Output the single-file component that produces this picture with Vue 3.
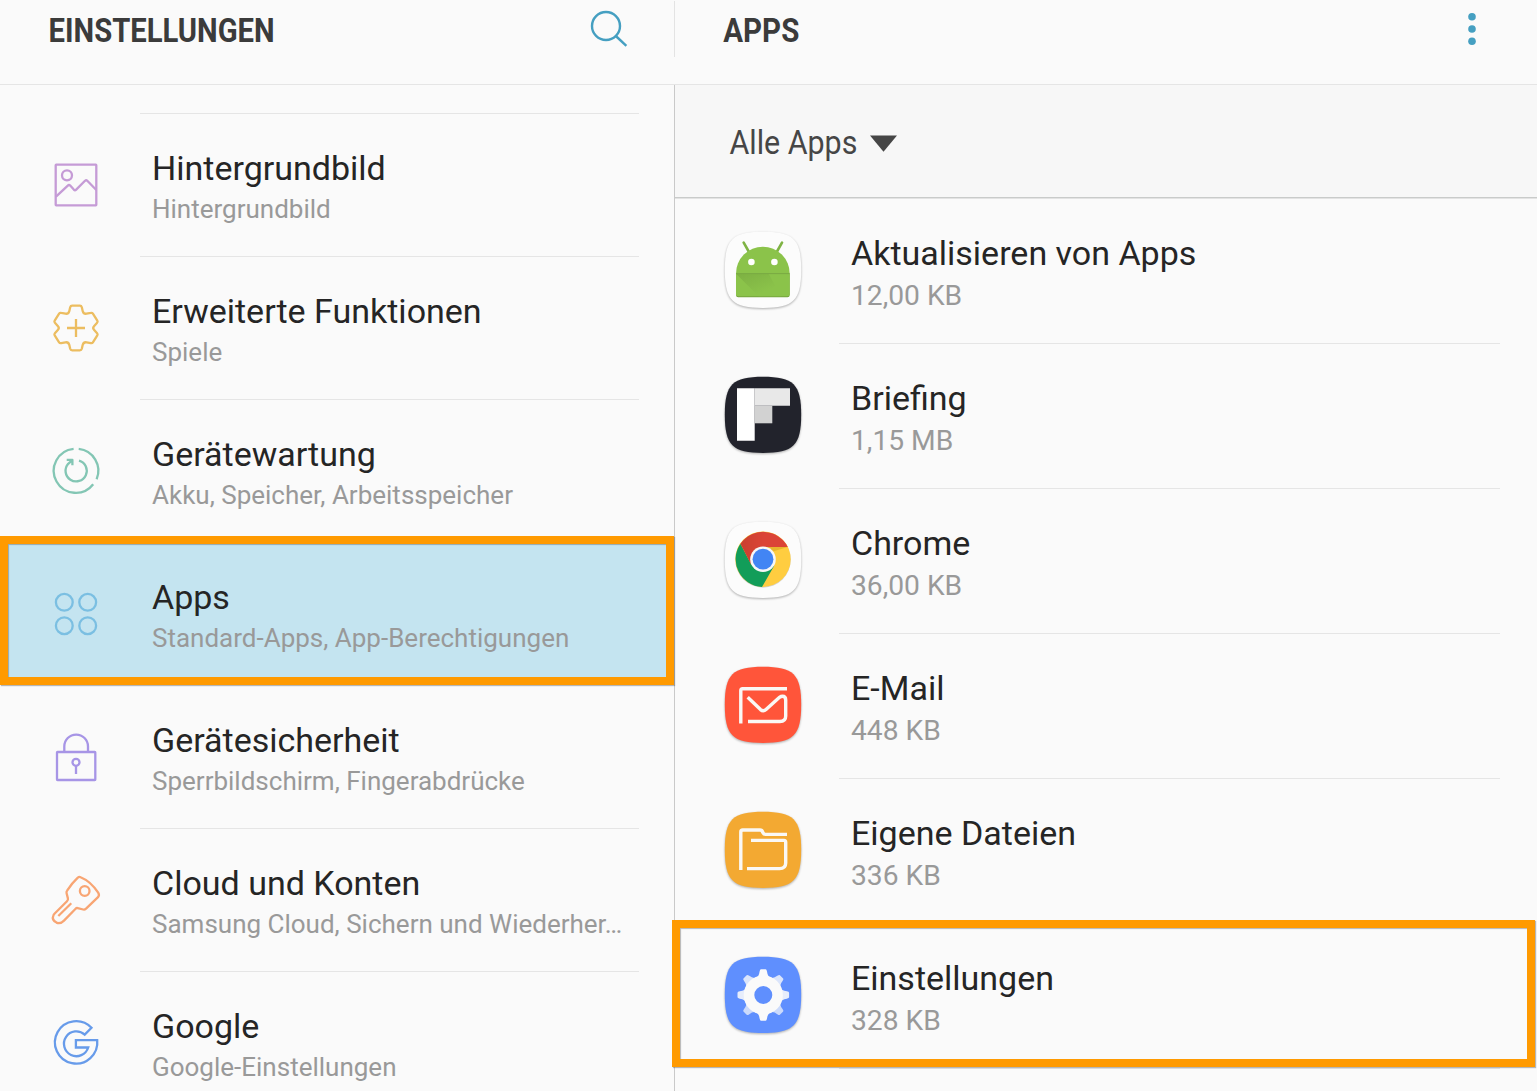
<script setup>
const settings = [
  { id: 'wallpaper', title: 'Hintergrundbild', sub: 'Hintergrundbild', color: '#c59bd6' },
  { id: 'advanced', title: 'Erweiterte Funktionen', sub: 'Spiele', color: '#ecbd60' },
  { id: 'care', title: 'Gerätewartung', sub: 'Akku, Speicher, Arbeitsspeicher', color: '#83c6b4' },
  { id: 'apps', title: 'Apps', sub: 'Standard-Apps, App-Berechtigungen', color: '#7bbfe2' },
  { id: 'lock', title: 'Gerätesicherheit', sub: 'Sperrbildschirm, Fingerabdrücke', color: '#a795e6' },
  { id: 'cloud', title: 'Cloud und Konten', sub: 'Samsung Cloud, Sichern und Wiederher…', color: '#f8a573' },
  { id: 'google', title: 'Google', sub: 'Google-Einstellungen', color: '#679bea' },
]
const apps = [
  { id: 'update', title: 'Aktualisieren von Apps', size: '12,00 KB', bg: '#fcfcfc' },
  { id: 'briefing', title: 'Briefing', size: '1,15 MB', bg: '#22232c' },
  { id: 'chrome', title: 'Chrome', size: '36,00 KB', bg: '#fcfcfc' },
  { id: 'email', title: 'E-Mail', size: '448 KB', bg: '#ff553a' },
  { id: 'files', title: 'Eigene Dateien', size: '336 KB', bg: '#f3a932' },
  { id: 'settings', title: 'Einstellungen', size: '328 KB', bg: '#5f8ffe' },
]
const squircle = 'M42 3.8C72.5 3.8 80.2 11.3 80.2 41.8S72.5 80 42 80S3.8 72.3 3.8 41.8S11.5 3.8 42 3.8Z'
const tooth = 'M34 25Q38 24 38.6 18.5Q39 16.2 40 16.2H44.6Q45.6 16.2 46 18.5Q46.6 24 50.6 25Z'
</script>

<template>
  <div class="screen">
    <header class="top">
      <div class="top-left">
        <svg class="heading" width="230" height="40"><text x=".6" y="30" textLength="226" lengthAdjust="spacingAndGlyphs">EINSTELLUNGEN</text></svg>
        <svg class="search" width="40" height="40" viewBox="0 0 40 40"><circle cx="17" cy="16" r="14" /><path d="M26.8 26L37.4 35.8" /></svg>
      </div>
      <div class="top-right">
        <svg class="heading" width="90" height="40"><text x=".3" y="30" textLength="76" lengthAdjust="spacingAndGlyphs">APPS</text></svg>
        <svg class="more" width="10" height="34"><circle cx="5" cy="4.7" r="3.8" /><circle cx="5" cy="17" r="3.8" /><circle cx="5" cy="29.3" r="3.8" /></svg>
      </div>
    </header>

    <main class="panes">
      <nav class="left">
        <div v-for="s in settings" :key="s.id" class="item" :class="s.id">
          <svg class="line-icon" width="48" height="48" viewBox="0 0 48 48" :stroke="s.color">
            <g v-if="s.id === 'wallpaper'"><rect x="3.7" y="3.7" width="40.6" height="40.6" rx=".5" /><circle cx="15" cy="14.3" r="5" /><path d="M4 35.7L15.8 24.6Q17 23.4 18.2 24.6L21.8 28.6Q23 29.8 24.2 28.6L33 19.8Q34.2 18.8 35.3 19.8L44.3 29" /></g>
            <g v-else-if="s.id === 'advanced'">
              <path d="M20.2 1.7H27.8Q29.4 1.7 29.8 3.2L30.8 7.4Q31.7 10.2 34.5 9.7L38.8 8.9Q40.2 8.6 40.9 9.7L45.3 16.6Q46 17.8 45.1 18.8L42 22.2Q40.4 24 42 25.8L45.1 29.2Q46 30.2 45.3 31.4L40.9 38.3Q40.2 39.4 38.8 39.1L34.5 38.3Q31.7 37.8 30.8 40.6L29.8 44.8Q29.4 46.3 27.8 46.3H20.2Q18.6 46.3 18.2 44.8L17.2 40.6Q16.3 37.8 13.5 38.3L9.2 39.1Q7.8 39.4 7.1 38.3L2.7 31.4Q2 30.2 2.9 29.2L6 25.8Q7.6 24 6 22.2L2.9 18.8Q2 17.8 2.7 16.6L7.1 9.7Q7.8 8.6 9.2 8.9L13.5 9.7Q16.3 10.2 17.2 7.4L18.2 3.2Q18.6 1.7 20.2 1.7Z" />
              <path d="M15 24H33M24 15V33" />
            </g>
            <g v-else-if="s.id === 'care'"><path d="M26.7 1.9A22 22 0 0 1 44.6 32.3M41.2 37.2A22 22 0 1 1 21.6 1.9" /><path d="M27 13.6A10.6 10.6 0 1 1 16.2 16.8L20.2 13.2M14.7 12.9H20.4V18.3" /></g>
            <g v-else-if="s.id === 'apps'"><circle cx="12.3" cy="12.3" r="8.4" /><circle cx="35.7" cy="12.3" r="8.4" /><circle cx="12.3" cy="35.7" r="8.4" /><circle cx="35.7" cy="35.7" r="8.4" /></g>
            <g v-else-if="s.id === 'lock'"><rect x="5" y="19" width="38.3" height="28" rx=".5" /><path d="M12.3 19V13.4A11.85 11.8 0 0 1 36 13.4V19M24 33V41" /><circle cx="24" cy="29.3" r="3.5" /></g>
            <g v-else-if="s.id === 'cloud'"><path d="M28.6 1.2Q38.8 5.3 46.2 16.7Q47.8 19.3 46 21.2L33.8 32.8Q32.8 33.9 31.2 33.5L25.7 32.1Q24.5 31.8 23.6 32.7L12 44.6Q8.3 48.3 4.5 46.6Q-.6 44 1.4 39.4Q1.7 38.5 2.7 37.5L15 25.2Q16.3 24 15.9 22.4L14.6 17.2Q14.2 15.8 15.1 14.6Q20 7 25.8 1.6Q27.2 .5 28.6 1.2Z" /><circle cx="32.7" cy="15" r="4.8" /><path d="M6.3 40L19.3 27.3" /></g>
            <g v-else><path stroke-linejoin="miter" d="M39.5 8.8A21.2 21.2 0 1 0 45.2 21.2H23.9V28.5H36.2A12.4 12.4 0 1 1 32.7 15.6Z" /></g>
          </svg>
          <div class="body"><div class="title">{{ s.title }}</div><div class="sub">{{ s.sub }}</div></div>
        </div>
        <div class="frame frame-left"></div>
      </nav>

      <section class="right">
        <div class="filter">
          <svg width="140" height="48"><text x=".4" y="34" textLength="128" lengthAdjust="spacingAndGlyphs">Alle Apps</text></svg>
          <svg class="caret" width="27" height="17"><path d="M0 .5H27L13.5 16.8Z" /></svg>
        </div>
        <div v-for="a in apps" :key="a.id" class="app">
          <svg class="app-icon" width="84" height="84" viewBox="0 0 84 84">
            <defs>
              <linearGradient id="fold" x1="0" y1="0" x2=".8" y2="1"><stop offset="0" stop-color="#6f9d3b" /><stop offset=".8" stop-color="#8bc34a" /></linearGradient>
              <linearGradient id="redShade" x1="0" y1="0" x2="1" y2="0"><stop offset="0" stop-color="#c9402f" /><stop offset=".5" stop-color="#db4437" /></linearGradient>
            </defs>
            <path :d="squircle" :fill="a.bg" />
            <g v-if="a.id === 'update'" transform="translate(-.3 0)">
              <path d="M23 14.6L28 23.5M61.3 14.6L56.3 23.5" stroke="#7fb344" stroke-width="2.6" stroke-linecap="round" />
              <path d="M15.3 45.7V67Q15.3 69.3 17.5 69.3H66.8Q69 69.3 69 67V45.7Z" fill="#74a33e" />
              <path d="M15.3 45.7A26.85 27 0 0 1 69 45.7Z" fill="#8bc34a" />
              <path d="M15.3 45.7V66.3Q15.3 68.3 17.5 68.3H66.8Q69 68.3 69 66.3V45.7Z" fill="#8bc34a" />
              <path d="M15.3 45.7L38 68.3H60L48 45.7Z" fill="url(#fold)" opacity=".5" />
              <path d="M15.3 45.6H69" stroke="#78a940" stroke-width="1" />
              <circle cx="30.7" cy="34" r="3.3" fill="#fff" /><circle cx="53.7" cy="34" r="3.3" fill="#fff" />
            </g>
            <g v-else-if="a.id === 'briefing'"><path d="M16 15.3H33.7V67.7H16Z" fill="#fff" /><path d="M33.7 15.3H69V32.7H33.7Z" fill="#e8e8e8" /><path d="M33.7 32.7H51.3V50.3H33.7Z" fill="#d2d2d2" /></g>
            <g v-else-if="a.id === 'chrome'" transform="translate(-.3 .2)">
              <circle cx="42.3" cy="41.8" r="27.7" fill="#b9b9b9" opacity=".6" />
              <circle cx="42.3" cy="41" r="27.7" fill="#ffcd40" />
              <path d="M42.3 28.7H67L53 33Z" fill="#e8b52e" />
              <path d="M19.7 25.5A27.7 27.7 0 0 0 41.3 68.7L53.5 47.5L42 41L31 47Z" fill="#129d59" />
              <path d="M19.7 25.5A27.7 27.7 0 0 1 67.1 28.7H42.3L30.5 46.5Z" fill="url(#redShade)" />
              <circle cx="42.3" cy="41" r="12.8" fill="#f7f7f7" /><circle cx="42.3" cy="41" r="10.4" fill="#4285f4" />
            </g>
            <g v-else-if="a.id === 'email'" class="glyph"><path d="M19.8 60.5V27.5Q19.8 25.7 21.6 25.7H66" /><path d="M27 58.5H59Q64.7 58.5 64.7 53V37Q64.7 33.2 61.5 33.2Q60 33.2 58.5 34.3L45 46.6Q42.3 49 39.5 46.6L26.7 34.3" /></g>
            <g v-else-if="a.id === 'files'" class="glyph"><path d="M19.8 62V24Q19.8 22 21.8 22H39Q41 22 41.6 24L42 24.8Q42.7 26.4 44.5 26.4H66" /><path d="M30 32.4H63Q64.7 32.4 64.7 34.2V55Q64.7 60.6 58.5 60.6H26" /></g>
            <g v-else fill="#fafafa">
              <path v-for="r in [45, 315]" :key="r" :d="tooth" :transform="`rotate(${r} 42.3 42)`" opacity=".8" />
              <path v-for="r in [135, 225]" :key="r" :d="tooth" :transform="`rotate(${r} 42.3 42)`" opacity=".7" />
              <path v-for="r in [90, 270]" :key="r" :d="tooth" :transform="`rotate(${r} 42.3 42)`" opacity=".88" />
              <path v-for="r in [0, 180]" :key="r" :d="tooth" :transform="`rotate(${r} 42.3 42)`" />
              <path fill-rule="evenodd" d="M42.3 22.4A19.6 19.6 0 1 0 42.3 61.6A19.6 19.6 0 1 0 42.3 22.4ZM42.3 33A9 9 0 1 1 42.3 51A9 9 0 1 1 42.3 33Z" />
            </g>
          </svg>
          <div class="body"><div class="title">{{ a.title }}</div><div class="size">{{ a.size }}</div></div>
        </div>
        <div class="frame frame-right"></div>
      </section>
    </main>
  </div>
</template>

<style>
body { margin: 0; overflow: hidden; background: #fafafa; }
</style>

<style scoped>
.screen { width: 1537px; height: 1091px; overflow: hidden; background: #fafafa; font-family: Roboto, "Liberation Sans", sans-serif; color: #252525; display: flex; flex-direction: column; }
svg { display: block; flex: none; overflow: visible; }
.top { height: 84px; flex: none; display: flex; border-bottom: 1px solid #e5e5e5; }
.top-left { box-sizing: border-box; width: 674px; padding: 0 46px 0 48px; display: flex; justify-content: space-between; }
.top-right { box-sizing: border-box; flex: 1; height: 56px; margin-top: 1px; padding: 0 60px 0 48px; border-left: 1px solid #e3e3e3; display: flex; justify-content: space-between; }
.heading { margin-top: 12px; }
.top-right .heading { margin-top: 11px; }
.heading text { font-size: 34px; font-weight: 700; fill: #3b3b3b; }
.search { margin-top: 10px; margin-right: -.5px; fill: none; stroke: #459fc1; stroke-width: 2.4; }
.more { margin-top: 11px; fill: #459fc1; }
.panes { flex: 1; display: flex; min-height: 0; }
.left { position: relative; box-sizing: border-box; width: 674px; padding-top: 28px; }
.item { position: relative; box-sizing: border-box; height: 143px; padding-left: 52px; display: flex; }
.item.apps { background: #c4e4f0; }
.line-icon { margin-top: 48px; fill: none; stroke-width: 2.3; stroke-linejoin: round; stroke-linecap: butt; }
.item .body { box-sizing: border-box; width: 499px; margin-left: 40px; padding: 34px 0 0 12px; border-top: 1px solid #e5e5e5; white-space: nowrap; }
.item.apps .body, .item.lock .body { border-top-color: transparent; }
.title { font-size: 34px; line-height: 40px; color: #252525; }
.sub { font-size: 26px; line-height: 30px; margin-top: 6px; color: #999; }
.right { position: relative; box-sizing: border-box; flex: 1; border-left: 1px solid #c9c9c9; }
.filter { box-sizing: border-box; height: 113px; margin-bottom: 1px; padding: 35px 0 0 54px; background: #f7f7f7; border-bottom: 1px solid #c9cbca; box-shadow: 0 1px #e3e3e3; display: flex; }
.filter text { font-size: 34px; fill: #464646; }
.caret { margin: 15px 0 0 1px; fill: #464646; }
.app { box-sizing: border-box; height: 145px; padding-left: 46px; display: flex; }
.app-icon { margin-top: 29px; filter: drop-shadow(0 1px .8px rgba(0, 0, 0, .3)); }
.app .body { box-sizing: border-box; width: 661px; margin-left: 34px; padding: 34px 0 0 12px; border-bottom: 1px solid #e5e5e5; }
.size { font-size: 28.2px; line-height: 32px; margin-top: 7px; color: #999; }
.glyph { fill: none; stroke: #faf8f5; stroke-width: 3.4; }
.frame { position: absolute; box-sizing: border-box; border: 8px solid #ff9a00; box-shadow: 1px 1px 1px rgba(80, 80, 80, .4), inset 1px 1px 1px rgba(80, 80, 80, .4); z-index: 2; }
.frame-left { left: 0; top: 451px; width: 674px; height: 149px; }
.frame-right { left: -3px; top: 835px; width: 863px; height: 147px; }
</style>
